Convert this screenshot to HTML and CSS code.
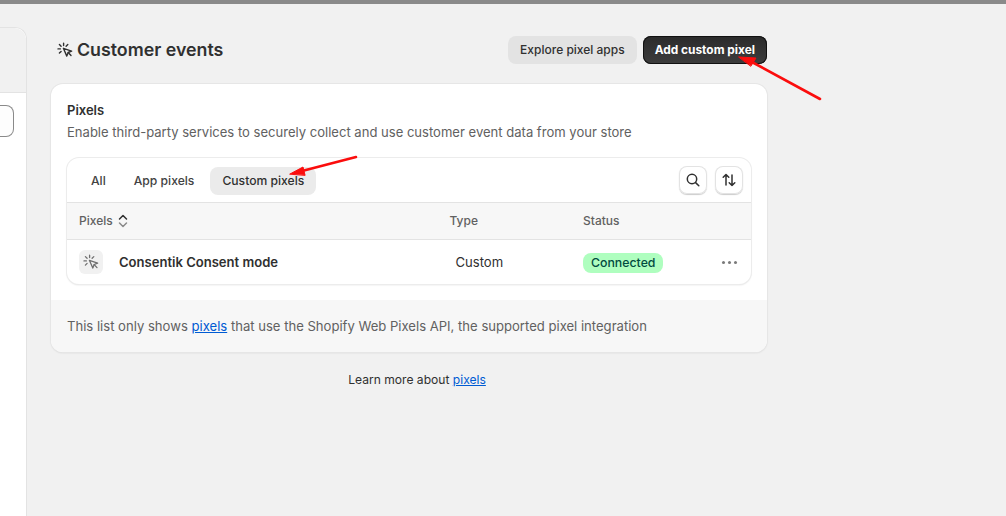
FILE: index.html
```html
<!DOCTYPE html>
<html lang="en">
<head>
<meta charset="utf-8">
<title>Customer events</title>
<link rel="stylesheet" href="styles.css">
</head>
<body>
<div class="topbar"></div>
<div class="shell">
  <aside class="side">
    <div class="side-head"></div>
    <div class="side-body"><div class="side-input"></div></div>
  </aside>
  <main class="main">
    <header class="page-head">
      <h1 class="title">
        <svg class="title-icon" viewBox="0 0 16 16" width="16" height="16" fill="none" stroke="#303030" stroke-width="1.4" stroke-linecap="round" stroke-linejoin="round"><path d="M6.600 1.200v2.400M2.400 2.600l1.700 1.700M10.800 2.600 9.100 4.300M1 6.900h2.400M2.400 11.100l1.700-1.700"/><path d="M6.400 6.300l8.200 2.900-3.400 1.300-1.400 3.600z"/><path d="M11.200 10.600l2.800 3"/></svg>
        Customer events
      </h1>
      <div class="head-actions">
        <button class="btn btn-grey">Explore pixel apps</button>
        <button class="btn btn-dark">Add custom pixel</button>
      </div>
    </header>

    <section class="card">
      <div class="card-top">
        <h2 class="card-title">Pixels</h2>
        <p class="card-sub">Enable third-party services to securely collect and use customer event data from your store</p>
        <div class="panel">
          <div class="tabs">
            <span class="tab">All</span>
            <span class="tab">App pixels</span>
            <span class="tab tab-active">Custom pixels</span>
            <span class="tab-tools">
              <span class="tool"><svg viewBox="0 0 16 16" width="16" height="16" fill="none" stroke="#303030" stroke-width="1.5" stroke-linecap="round"><circle cx="7" cy="7" r="4.700"/><path d="m10.600 10.600 3.200 3.200"/></svg></span>
              <span class="tool"><svg viewBox="0 0 16 16" width="16" height="16" fill="none" stroke="#303030" stroke-width="1.500" stroke-linecap="round" stroke-linejoin="round"><path d="M5 13v-10.500M2.200 5.300 5 2.500l2.800 2.800M11 3v10.500M8.200 10.700l2.800 2.800 2.800-2.800"/></svg></span>
            </span>
          </div>
          <div class="row row-head">
            <span class="col-name">Pixels
              <svg class="sort" viewBox="0 0 12 16" width="12" height="16" fill="none" stroke-width="1.500" stroke-linecap="round" stroke-linejoin="round"><path d="M2.500 6 6 2.500 9.500 6" stroke="#303030"/><path d="M2.500 10 6 13.500 9.500 10" stroke="#8a8a8a"/></svg>
            </span>
            <span class="col-type">Type</span>
            <span class="col-status">Status</span>
          </div>
          <div class="row row-item">
            <span class="col-name item-name">
              <span class="thumb"><svg viewBox="0 0 16 16" width="16" height="16" fill="none" stroke="#707070" stroke-width="1.300" stroke-linecap="round" stroke-linejoin="round"><path d="M6.600 1.200v2.400M2.400 2.600l1.700 1.700M10.800 2.600 9.100 4.300M1 6.900h2.400M2.400 11.100l1.700-1.700"/><path d="M6.400 6.300l8.200 2.900-3.400 1.300-1.400 3.600z"/><path d="M11.200 10.600l2.800 3"/></svg></span>
              Consentik Consent mode
            </span>
            <span class="col-type item-type">Custom</span>
            <span class="col-status"><span class="badge">Connected</span></span>
            <span class="dots"><i></i><i></i><i></i></span>
          </div>
        </div>
      </div>
      <div class="card-foot">This list only shows <a href="#">pixels</a> that use the Shopify Web Pixels API, the supported pixel integration</div>
    </section>

    <p class="learn">Learn more about <a href="#">pixels</a></p>
  </main>
</div>
<svg class="arrows" width="1006" height="516" viewBox="0 0 1006 516" fill="#fb0d0d" stroke="#fb0d0d" stroke-linecap="round">
  <path d="M820 99 750 61" stroke-width="2.600" fill="none"/>
  <path d="M739 57 756 58 751 66z" stroke-width="1"/>
  <path d="M356 157 302 171" stroke-width="2.600" fill="none"/>
  <path d="M290 174 303 167 305 175z" stroke-width="1"/>
</svg>
</body>
</html>
```
FILE: styles.css
```css
* { box-sizing: border-box; }
html, body { margin: 0; padding: 0; height: 100%; }
body {
  position: relative;
  width: 1006px;
  height: 516px;
  overflow: hidden;
  background: #f1f1f1;
  color: #303030;
  font-family: Inter, "Liberation Sans", sans-serif;
  font-size: 13.08px;
  line-height: 20px;
}
.topbar { height: 4px; background: #8a8a8a; }
.shell { display: flex; height: 512px; }

.side {
  flex: none;
  width: 27px;
  margin-top: 23px;
  background: #fff;
  border: 1px solid #e3e3e3;
  border-left: 0;
  border-bottom: 0;
  border-top-right-radius: 12px;
  display: flex;
  flex-direction: column;
}
.side-head { height: 65px; background: #f1f1f1; border-bottom: 1px solid #e3e3e3; border-top-right-radius: 12px; }
.side-body { padding-top: 12px; }
.side-input {
  width: 14px;
  height: 32px;
  background: #fdfdfd;
  border: 1px solid #8a8a8a;
  border-left: 0;
  border-radius: 0 8px 8px 0;
}

.main { flex: none; width: 716px; margin-left: 24px; }
.page-head {
  display: flex;
  align-items: center;
  justify-content: space-between;
  height: 28px;
  margin-top: 32px;
}
.title {
  display: flex;
  align-items: center;
  gap: 4px;
  margin: 0 0 0 6px;
  font-size: 17.8px;
  line-height: 24px;
  font-weight: 600;
  color: #303030;
}
.title-icon { flex: none; }
.head-actions { display: flex; gap: 6px; }
.btn {
  height: 28px;
  padding: 0 12px;
  border: 0;
  border-radius: 8px;
  font-family: inherit;
  font-size: 12px;
  line-height: 16px;
  font-weight: 550;
}
.btn-grey { background: #e3e3e3; color: #303030; }
.btn-dark {
  background: linear-gradient(#2b2b2b, #3d3d3d);
  color: #fff;
  font-size: 11.9px;
  font-weight: 650;
  box-shadow: inset 0 0 0 1px #111;
}

.card {
  margin-top: 20px;
  background: #fff;
  border-radius: 12px;
  overflow: hidden;
  box-shadow: 0 0 0 1px #e6e6e6, 0 1px 2px rgba(0, 0, 0, .12);
}
.card-top { padding: 16px 16px 16px; }
.card-title { margin: 0; font-size: 13px; line-height: 20px; font-weight: 600; }
.card-sub { margin: 2px 0 16px; color: #616161; font-size: 13.05px; line-height: 20px; }

.panel {
  border-radius: 12px;
  overflow: hidden;
  background: #fff;
  box-shadow: 0 0 0 1px #ececec, 0 1px 2px rgba(0, 0, 0, .14);
}
.tabs {
  display: flex;
  align-items: center;
  gap: 4px;
  height: 45px;
  padding: 0 8px 0 12px;
  border-bottom: 1px solid #e3e3e3;
}
.tab { margin-top: 2px; padding: 4px 12px; height: 28px; border-radius: 8px; font-size: 12.15px; font-weight: 500; color: #424242; white-space: nowrap; }
.tab-active { background: #ebebeb; color: #303030; }
.tab-tools { margin-left: auto; display: flex; gap: 8px; }
.tool {
  display: flex;
  align-items: center;
  justify-content: center;
  width: 28px;
  height: 28px;
  border-radius: 8px;
  background: #fff;
  box-shadow: inset 0 0 0 1px #e3e3e3, 0 1px 1px rgba(0, 0, 0, .2);
}

.row { display: flex; align-items: center; padding: 0 12px; }
.row-head {
  height: 37px;
  background: #f7f7f7;
  border-bottom: 1px solid #e3e3e3;
  color: #616161;
  font-size: 12px;
  font-weight: 500;
}
.row-head .col-name { gap: 4px; }
.row-item { height: 44px; }
.col-name { display: flex; align-items: center; flex: none; width: 370.5px; }
.col-type { flex: none; width: 133.5px; }
.col-status { flex: none; }
.item-name { gap: 16px; font-size: 13.05px; font-weight: 600; color: #303030; }
.item-type { padding-left: 6px; color: #303030; }
.thumb {
  display: flex;
  align-items: center;
  justify-content: center;
  width: 24px;
  height: 24px;
  border-radius: 6px;
  background: #f1f1f1;
}
.badge {
  display: inline-block;
  height: 20px;
  padding: 0 8px;
  border-radius: 8px;
  background: #affebf;
  color: #014b40;
  font-size: 12.3px;
  font-weight: 500;
  line-height: 20px;
}
.dots { display: flex; gap: 3px; margin-left: auto; padding-right: 2.5px; }
.dots i { width: 3px; height: 3px; border-radius: 50%; background: #7a7a7a; }

.card-foot {
  height: 52px;
  padding: 16px;
  background: #f7f7f7;
  color: #616161;
}
a { color: #005bd3; text-decoration: underline; }
.learn { margin: 18px 0 0; padding-left: 16px; text-align: center; font-size: 12.1px; line-height: 20px; color: #303030; }

.arrows { position: absolute; left: 0; top: 0; pointer-events: none; }
```
